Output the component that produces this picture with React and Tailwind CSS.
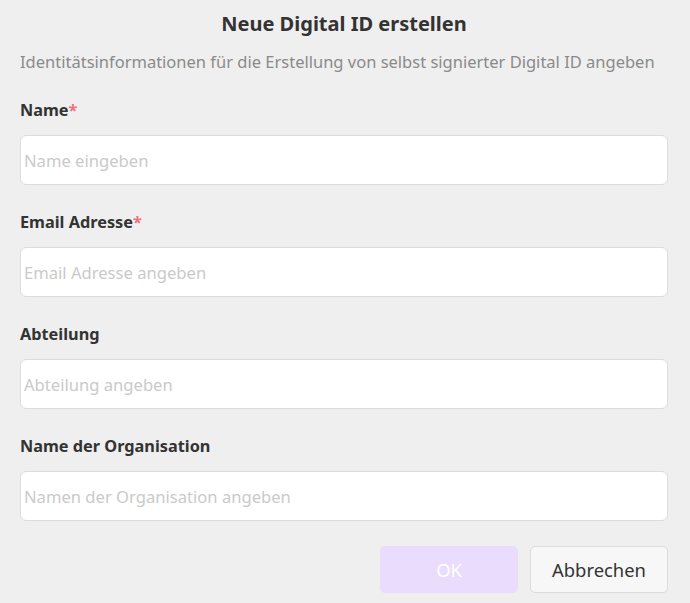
import React from 'react';

const fields = [
  { label: 'Name', required: true, placeholder: 'Name eingeben' },
  { label: 'Email Adresse', required: true, placeholder: 'Email Adresse angeben' },
  { label: 'Abteilung', required: false, placeholder: 'Abteilung angeben' },
  { label: 'Name der Organisation', required: false, placeholder: 'Namen der Organisation angeben' },
];

const App = () => {
  return (
    <div className="w-[690px] h-[603px] bg-[#efefef] pl-5 pr-[22px] pt-[10px] font-['Noto_Sans',sans-serif] text-[#333]">
      <h1 className="text-center text-[20px] leading-[28px] font-bold text-[#333]">
        Neue Digital ID erstellen
      </h1>
      <p className="mt-[10px] whitespace-nowrap text-[16.5px] leading-[28px] text-[#8a8a8a]">
        Identitätsinformationen für die Erstellung von selbst signierter Digital ID angeben
      </p>
      <div className="mt-[22px] flex flex-col gap-[25px]">
        {fields.map((f) => (
          <div key={f.label} className="flex flex-col gap-[13px]">
            <label className="text-[16.3px] leading-[24px] font-bold text-[#333]">
              {f.label}
              {f.required && <span className="text-[#f0717a]">*</span>}
            </label>
            <input
              type="text"
              placeholder={f.placeholder}
              className="h-[50px] w-full rounded-[6px] border border-[#dcdcdc] bg-white px-[3px] text-[16.6px] text-[#333] placeholder:text-[#cacaca] outline-none"
            />
          </div>
        ))}
      </div>
      <div className="mt-[25px] flex justify-end gap-3">
        <button className="h-[47px] w-[138px] rounded-[5px] bg-[#e9dcfd] text-[18.4px] text-white">
          OK
        </button>
        <button className="h-[47px] w-[138px] rounded-[5px] border border-[#dcdcdc] bg-[#f7f7f7] text-[18.4px] text-[#333]">
          Abbrechen
        </button>
      </div>
    </div>
  );
};

export default App;
